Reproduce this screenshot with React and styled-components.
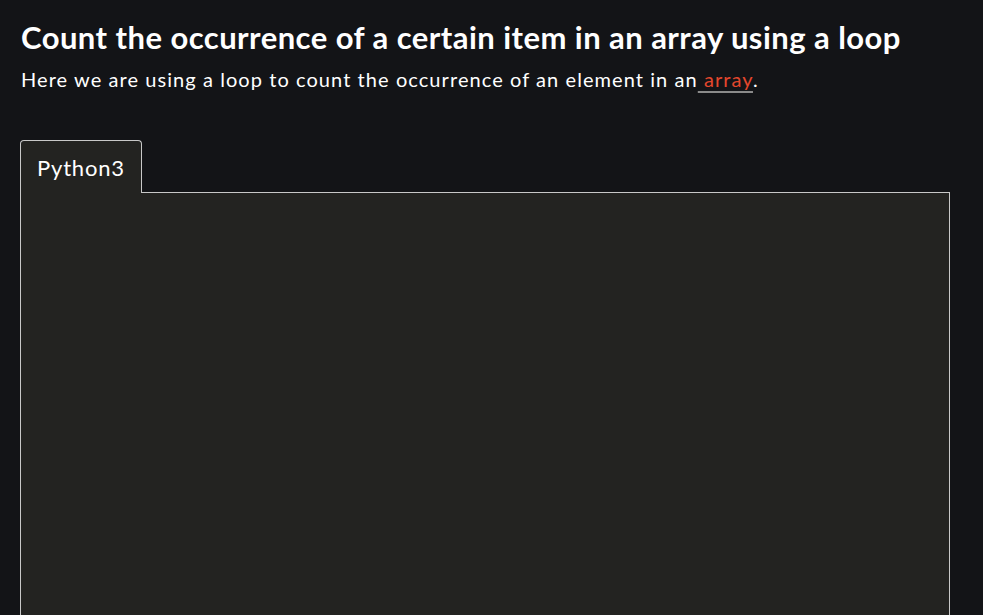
import React from "react";
import styled, { createGlobalStyle } from "styled-components";

const Global = createGlobalStyle`
  html, body {
    margin: 0;
    background: #131417;
  }
  body {
    font-family: Lato, "Noto Sans", sans-serif;
    color: #ffffff;
  }
`;

const Page = styled.div`
  padding: 17px 33px 0 20px;
  height: 615px;
  box-sizing: border-box;
  overflow: hidden;
  display: flex;
  flex-direction: column;
`;

const Title = styled.h2`
  margin: 0;
  font-size: 31px;
  font-weight: 700;
  line-height: 40px;
  letter-spacing: 0.45px;
  padding-left: 1px;
`;

const Lead = styled.p`
  margin: 8px 0 0;
  font-size: 20px;
  line-height: 28px;
  letter-spacing: 1.07px;
  padding-left: 1px;
`;

const Link = styled.a`
  color: #e4472d;
  text-decoration: underline;
  text-decoration-color: #8a8a8a;
  text-underline-offset: 4px;
`;

const Tabs = styled.div`
  margin-top: 47px;
  display: flex;
  position: relative;
  z-index: 1;
  margin-bottom: -1px;
`;

const Tab = styled.div`
  background: #232321;
  border: 1px solid #c8c8c8;
  border-bottom: none;
  border-radius: 4px 4px 0 0;
  padding: 0 16px;
  height: 52px;
  display: flex;
  align-items: center;
  font-size: 22px;
  letter-spacing: 0.8px;
  color: #ffffff;
`;

const Panel = styled.div`
  flex: 1;
  background: #232321;
  border: 1px solid #c8c8c8;
  border-bottom: none;
`;

export default function App() {
  return (
    <>
      <Global />
      <Page>
        <Title>Count the occurrence of a certain item in an array using a loop</Title>
        <Lead>
          Here we are using a loop to count the occurrence of an element in an
          <Link href="#"> array</Link>.
        </Lead>
        <Tabs>
          <Tab>Python3</Tab>
        </Tabs>
        <Panel />
      </Page>
    </>
  );
}
